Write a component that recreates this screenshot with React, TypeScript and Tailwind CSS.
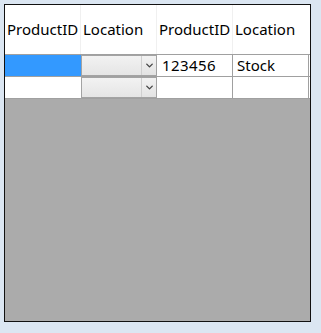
import { ChevronDown } from 'lucide-react'

const font = { fontFamily: '"Noto Sans", "Open Sans", sans-serif' }

function HeaderCell({ label, last }: { label: string; last?: boolean }) {
  return (
    <div
      className={`w-[76px] h-full flex items-center pl-[2px] text-[15px] text-black ${
        last ? '' : 'border-r border-[#f0f0f0]'
      }`}
    >
      {label}
    </div>
  )
}

function Combo() {
  return (
    <div className="w-[76px] h-full flex border border-[#a3a3a3] bg-[#ebebeb]">
      <div className="flex-1 bg-gradient-to-b from-[#f2f2f2] to-[#e5e5e5]" />
      <div className="w-[15px] flex items-center justify-center border-l border-[#cfcfcf] bg-gradient-to-b from-[#f2f2f2] to-[#e3e3e3]">
        <ChevronDown size={11} strokeWidth={3} className="text-[#444]" />
      </div>
    </div>
  )
}

function Row({ selected, id, loc }: { selected?: boolean; id?: string; loc?: string }) {
  return (
    <div className="flex h-[22px] bg-white border-b border-[#a0a0a0]">
      <div className={`w-[76px] h-full ${selected ? 'bg-[#3399ff]' : 'bg-white'}`} />
      <Combo />
      <div className="w-[76px] h-full flex items-center pl-[5px] text-[15px] tracking-[0.4px] border-r border-[#a0a0a0]">
        {id}
      </div>
      <div className="w-[76px] h-full flex items-center pl-[4px] text-[15px] border-r border-[#a0a0a0]">
        {loc}
      </div>
    </div>
  )
}

export default function App() {
  return (
    <div className="w-[321px] h-[333px] bg-[#dbe6f2] pt-[4px] pl-[4px]" style={font}>
      <div className="w-[307px] h-[318px] border border-[#111] bg-[#ababab] flex flex-col">
        <div className="flex h-[50px] bg-white border-b border-[#a0a0a0]">
          <HeaderCell label="ProductID" />
          <HeaderCell label="Location" />
          <HeaderCell label="ProductID" />
          <HeaderCell label="Location" last />
        </div>
        <Row selected id="123456" loc="Stock" />
        <Row />
      </div>
    </div>
  )
}
